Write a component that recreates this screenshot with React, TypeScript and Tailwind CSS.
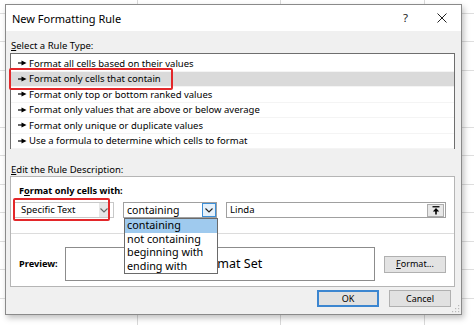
import React from "react";

const Arrow = () => (
  <svg width="9" height="6" viewBox="0 0 9 6" className="shrink-0">
    <path d="M0 3H4" stroke="#000" strokeWidth="1.2" />
    <path d="M3.5 0.5L8.5 3L3.5 5.5Z" fill="#000" />
  </svg>
);

const Chevron = ({ color = "#333" }: { color?: string }) => (
  <svg width="8" height="5" viewBox="0 0 8 5">
    <path d="M0.5 0.5L4 4L7.5 0.5" fill="none" stroke={color} strokeWidth="1.1" />
  </svg>
);

const rules = [
  "Format all cells based on their values",
  "Format only cells that contain",
  "Format only top or bottom ranked values",
  "Format only values that are above or below average",
  "Format only unique or duplicate values",
  "Use a formula to determine which cells to format",
];

export default function App() {
  return (
    <div
      className="w-[474px] h-[325px] overflow-hidden bg-white bg-[image:repeating-linear-gradient(to_right,transparent_0,transparent_137px,#d9d9d9_137px,#d9d9d9_138px,transparent_138px,transparent_143.5px),repeating-linear-gradient(to_bottom,transparent_0,transparent_13px,#dedede_13px,#dedede_14px,transparent_14px,transparent_28.5px)] pt-[4px] pl-[5px] text-[9.5px] text-black"
      style={{ fontFamily: '"Noto Sans", "Open Sans", sans-serif' }}
    >
      <div className="relative w-[457px] h-[311px] border border-[#8a8a8a] shadow-[2px_3px_6px_rgba(0,0,0,0.25)] flex flex-col bg-[#f0f0f0]">
        {/* title bar */}
        <div className="h-[26px] bg-white flex items-center pl-[6px] pr-[14px] shrink-0">
          <span className="text-[11px] leading-none">New Formatting Rule</span>
          <span className="ml-auto text-[11.5px] leading-none text-[#222] mr-[29px]">?</span>
          <svg width="10" height="10" viewBox="0 0 10 10">
            <path d="M0.5 0.5L9.5 9.5M9.5 0.5L0.5 9.5" stroke="#222" strokeWidth="1" />
          </svg>
        </div>

        {/* body */}
        <div className="flex-1 px-[4px] pt-[8px] flex flex-col">
          <div className="h-[13px] leading-[13px] pl-[1px]">
            <span className="underline">S</span>elect a Rule Type:
          </div>
          <div className="mt-[1px] w-[445px] h-[96px] border border-[#6e6e6e] bg-white pt-[2px] relative">
            {rules.map((r, i) => (
              <div
                key={r}
                className={`h-[15.5px] flex items-center gap-[2px] pl-[7px] border-b border-[#f4f4f4] ${
                  i === 1 ? "bg-[#dadada]" : ""
                }`}
              >
                <Arrow />
                <span className="leading-none whitespace-nowrap">{r}</span>
              </div>
            ))}
            <div className="absolute left-[-2px] top-[14px] w-[164px] h-[22px] border-2 border-[#e3272a] rounded-[2px]" />
          </div>

          <div className="mt-[14px] h-[13px] leading-[13px] pl-[1px]">
            <span className="underline">E</span>dit the Rule Description:
          </div>
          <div className="w-[445px] h-[111px] border border-[#b5b5b5] bg-white flex flex-col">
            <div className="pt-[7px] pl-[8px] h-[20px] leading-[13px] font-bold text-[9.2px]">
              F<span className="underline">o</span>rmat only cells with:
            </div>
            <div className="mt-[5px] h-[16px] flex items-center pl-[3px] gap-[9px]">
              <div className="relative w-[100px] h-[16px] border border-[#c8c8c8] bg-white flex items-center">
                <span className="pl-[6px] leading-none">Specific Text</span>
                <div className="ml-auto mr-[5px] w-[9px] h-[14px] bg-[#e6e6e6] flex items-center justify-center">
                  <Chevron color="#666" />
                </div>
                <div className="absolute left-[-2px] top-[-5px] w-[97px] h-[23px] border-2 border-[#e3272a] rounded-[2px]" />
              </div>
              <div className="w-[94px] h-[16px] border border-[#a0a0a0] bg-white flex items-center">
                <span className="pl-[3px] leading-none text-[10.5px]">containing</span>
                <div className="ml-auto w-[14px] h-[14px] border border-[#3c8fd8] bg-[#e5f1fb] flex items-center justify-center">
                  <Chevron color="#222" />
                </div>
              </div>
              <div className="w-[220px] h-[16px] border border-[#a0a0a0] bg-white flex items-center">
                <span className="pl-[3px] leading-none">Linda</span>
                <div className="ml-auto mr-[1px] w-[17px] h-[13px] border border-[#adadad] bg-[#e8e8e8] flex items-center justify-center">
                  <svg width="8" height="9" viewBox="0 0 8 9">
                    <path d="M0.5 0.75H7.5" stroke="#000" strokeWidth="1.3" />
                    <path d="M4 2L7.2 5.4H0.8Z" fill="#000" />
                    <path d="M4 5V8.5" stroke="#000" strokeWidth="1.6" />
                  </svg>
                </div>
              </div>
            </div>
            <div className="mt-[15px] h-px bg-[#dcdcdc]" />
            <div className="mt-[13px] flex items-center pl-[8px]">
              <span className="font-bold w-[46px] leading-none text-[9.2px]">Preview:</span>
              <div className="w-[310px] h-[34px] border border-[#8c8c8c] bg-white flex items-center justify-center text-[12.5px]">
                No Format Set
              </div>
              <div className="ml-[9px] w-[62px] h-[17px] border border-[#b0b0b0] bg-[#e3e3e3] flex items-center justify-center text-[9px]">
                <span>
                  <span className="underline">F</span>ormat...
                </span>
              </div>
            </div>
          </div>

          <div className="mt-[3px] flex justify-end gap-[10px] pr-[6px] text-[9px]">
            <div className="w-[62px] h-[17px] border-2 border-[#3c86d0] bg-[#e1e1e1] flex items-center justify-center leading-none">
              OK
            </div>
            <div className="w-[62px] h-[17px] border border-[#b0b0b0] bg-[#e1e1e1] flex items-center justify-center leading-none">
              Cancel
            </div>
          </div>
        </div>

        {/* resize grip */}
        <svg className="absolute right-[1px] bottom-[1px]" width="8" height="8" viewBox="0 0 8 8">
          <rect x="6" y="0" width="1.2" height="1.2" fill="#b8b8b8" />
          <rect x="3" y="3" width="1.2" height="1.2" fill="#b8b8b8" />
          <rect x="6" y="3" width="1.2" height="1.2" fill="#b8b8b8" />
          <rect x="0" y="6" width="1.2" height="1.2" fill="#b8b8b8" />
          <rect x="3" y="6" width="1.2" height="1.2" fill="#b8b8b8" />
          <rect x="6" y="6" width="1.2" height="1.2" fill="#b8b8b8" />
        </svg>

        {/* open dropdown list */}
        <div className="absolute left-[118px] top-[213px] w-[94px] h-[56px] border border-[#6a6a6a] bg-white flex flex-col text-[10.8px]">
          <div className="h-[13.5px] bg-[#9fcaee] pl-[2px] flex items-center leading-none">containing</div>
          <div className="h-[13.5px] pl-[2px] flex items-center leading-none">not containing</div>
          <div className="h-[13.5px] pl-[2px] flex items-center leading-none">beginning with</div>
          <div className="h-[13.5px] pl-[2px] flex items-center leading-none">ending with</div>
        </div>
      </div>
    </div>
  );
}
